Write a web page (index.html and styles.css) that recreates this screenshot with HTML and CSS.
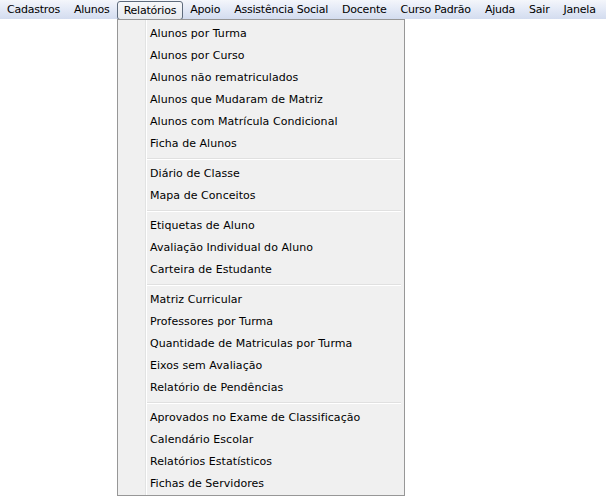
FILE: index.html
```html
<!DOCTYPE html>
<html lang="pt">
<head>
<meta charset="utf-8">
<title>Menu</title>
<link rel="stylesheet" href="styles.css">
</head>
<body>
<div class="app">
  <nav class="menubar">
    <span class="mb-item">Cadastros</span>
    <span class="mb-item">Alunos</span>
    <span class="mb-item mb-open">Relatórios</span>
    <span class="mb-item">Apoio</span>
    <span class="mb-item">Assistência Social</span>
    <span class="mb-item">Docente</span>
    <span class="mb-item">Curso Padrão</span>
    <span class="mb-item">Ajuda</span>
    <span class="mb-item">Sair</span>
    <span class="mb-item">Janela</span>
  </nav>
  <div class="dropdown">
    <div class="group">
      <div class="mi">Alunos por Turma</div>
      <div class="mi">Alunos por Curso</div>
      <div class="mi">Alunos não rematriculados</div>
      <div class="mi">Alunos que Mudaram de Matriz</div>
      <div class="mi">Alunos com Matrícula Condicional</div>
      <div class="mi">Ficha de Alunos</div>
    </div>
    <div class="sep"></div>
    <div class="group">
      <div class="mi">Diário de Classe</div>
      <div class="mi">Mapa de Conceitos</div>
    </div>
    <div class="sep"></div>
    <div class="group">
      <div class="mi">Etiquetas de Aluno</div>
      <div class="mi">Avaliação Individual do Aluno</div>
      <div class="mi">Carteira de Estudante</div>
    </div>
    <div class="sep"></div>
    <div class="group">
      <div class="mi">Matriz Curricular</div>
      <div class="mi">Professores por Turma</div>
      <div class="mi">Quantidade de Matriculas por Turma</div>
      <div class="mi">Eixos sem Avaliação</div>
      <div class="mi">Relatório de Pendências</div>
    </div>
    <div class="sep"></div>
    <div class="group">
      <div class="mi">Aprovados no Exame de Classificação</div>
      <div class="mi">Calendário Escolar</div>
      <div class="mi">Relatórios Estatísticos</div>
      <div class="mi">Fichas de Servidores</div>
    </div>
  </div>
</div>
</body>
</html>
```
FILE: styles.css
```css
html, body {
  margin: 0;
  padding: 0;
  background: #ffffff;
}
.app {
  position: relative;
  width: 606px;
  height: 497px;
  overflow: hidden;
  font-family: "DejaVu Sans", Verdana, sans-serif;
  font-size: 11px;
  color: #000;
}
.menubar {
  display: flex;
  align-items: center;
  height: 19px;
  background: linear-gradient(to bottom, #f4f6fb 0%, #e3e9f6 50%, #d3dcef 100%);
  border-bottom: 1px solid #ffffff;
}
.mb-item {
  padding: 0 7px;
  line-height: 17px;
  height: 17px;
  white-space: nowrap;
  letter-spacing: -0.22px;
}
.mb-open {
  border: 1px solid #5e6b7c;
  border-radius: 3px;
  background: linear-gradient(to bottom, #f7f8fa, #e6e9ee);
  padding: 0 6px;
  margin-top: 1px;
}
.dropdown {
  position: absolute;
  left: 117px;
  top: 19px;
  width: 286px;
  padding: 3px 0 0 0;
  background: #f0f0f0;
  border: 1px solid #979797;
  background-image: linear-gradient(to right, #f0f0f0 0, #f0f0f0 27px, #e2e3e3 27px, #e2e3e3 28px, #ffffff 28px, #ffffff 29px, #f0f0f0 29px);
}
.mi {
  height: 22px;
  line-height: 22px;
  padding-left: 32px;
  white-space: nowrap;
  letter-spacing: 0.05px;
}
.sep {
  height: 8px;
  margin-left: 29px;
  margin-right: 3px;
  background: linear-gradient(to bottom, transparent 0, transparent 3px, #e0e0e0 3px, #e0e0e0 4px, #ffffff 4px, #ffffff 5px, transparent 5px);
}
```
